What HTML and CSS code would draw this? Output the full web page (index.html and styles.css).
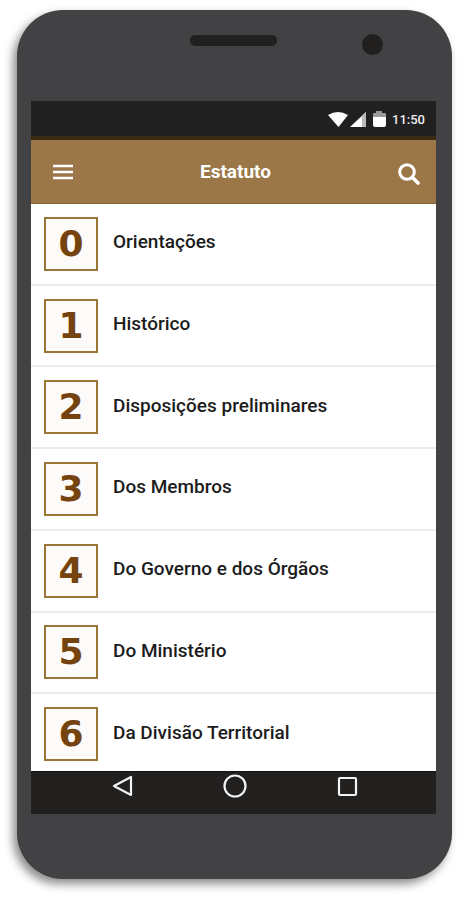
FILE: index.html
```html
<!DOCTYPE html>
<html lang="pt-BR">
<head>
    <meta charset="UTF-8">
    <meta name="viewport" content="width=device-width, initial-scale=1.0">
    <title>Estatuto</title>
    <link rel="stylesheet" href="styles.css">
</head>
<body>
    <div class="phone">
        <div class="phone-top">
            <span class="speaker"></span>
            <span class="camera"></span>
        </div>

        <div class="status-bar">
            <svg width="59" height="17" viewBox="0 0 59 17" aria-hidden="true">
                <path d="M0 4 Q10 -2 20 4 L10.500 16 Z" fill="#fff"/>
                <path d="M38 1 V16 H22 Z" fill="#fff"/>
                <path d="M34 5 L38 1 V16 H34 Z" fill="#bbb"/>
                <path d="M48 0 h6 v2 h2 q2 0 2 2 v10 q0 2 -2 2 h-9 q-2 0 -2 -2 v-10 q0 -2 2 -2 h1 z" fill="#fff"/>
                <path d="M48 0 h6 v2 h2 q2 0 2 2 v2 h-13 v-2 q0 -2 2 -2 h1 z" fill="#999"/>
            </svg>
            <span class="time">11:50</span>
        </div>

        <header class="app-bar">
            <button class="icon-button" type="button" aria-label="Menu">
                <svg width="20" height="16" viewBox="0 0 20 16">
                    <path d="M0 2 H20 M0 8 H20 M0 14 H20" stroke="#fff" stroke-width="2.600"/>
                </svg>
            </button>
            <h1>Estatuto</h1>
            <button class="icon-button search" type="button" aria-label="Buscar">
                <svg width="22" height="22" viewBox="0 0 22 22">
                    <circle cx="9" cy="9" r="7.300" fill="none" stroke="#fff" stroke-width="3"/>
                    <path d="M14.500 14.500 L20 20" stroke="#fff" stroke-width="3.600" stroke-linecap="round"/>
                </svg>
            </button>
        </header>

        <ul class="chapters">
            <li><a href="#orientacoes"><span class="number">0</span><span class="name">Orientações</span></a></li>
            <li><a href="#historico"><span class="number">1</span><span class="name">Histórico</span></a></li>
            <li><a href="#disposicoes"><span class="number">2</span><span class="name">Disposições preliminares</span></a></li>
            <li><a href="#membros"><span class="number">3</span><span class="name">Dos Membros</span></a></li>
            <li><a href="#governo"><span class="number">4</span><span class="name">Do Governo e dos Órgãos</span></a></li>
            <li><a href="#ministerio"><span class="number">5</span><span class="name">Do Ministério</span></a></li>
            <li><a href="#divisao"><span class="number">6</span><span class="name">Da Divisão Territorial</span></a></li>
        </ul>

        <nav class="nav-bar">
            <button type="button" aria-label="Voltar">
                <svg width="24" height="24" viewBox="0 0 24 24">
                    <path d="M3 12 L20 3 V21 Z"/>
                </svg>
            </button>
            <button type="button" aria-label="Início">
                <svg width="24" height="24" viewBox="0 0 24 24">
                    <circle cx="12" cy="12" r="10.500"/>
                </svg>
            </button>
            <button type="button" aria-label="Recentes">
                <svg width="24" height="24" viewBox="0 0 24 24">
                    <rect x="4" y="4" width="17" height="17" rx="1"/>
                </svg>
            </button>
        </nav>
    </div>
</body>
</html>
```
FILE: styles.css
```css
:root {
    --brand: #9b7748;
    --brand-dark: #3b2a12;
    --number-color: #74430f;
    --body-color: #424143;
    --bar-color: #221f1f;
    --line-color: #ececec;
}

* {
    box-sizing: border-box;
}

body {
    margin: 0;
    padding: 10px 12px 22px 17px;
    background-color: #fff;
    font-family: Roboto, "Noto Sans", sans-serif;
    color: #1c1c1c;
}

.phone {
    display: flex;
    flex-direction: column;
    padding: 0 16px 65px 14px;
    border-radius: 46px;
    background-color: var(--body-color);
    box-shadow: -4px 5px 10px rgba(0, 0, 0, 0.45);
}

.phone-top {
    display: grid;
    grid-template-columns: 1fr auto 1fr;
    align-items: start;
    height: 91px;
    padding-top: 24px;
}

.speaker {
    grid-column: 2;
    width: 87px;
    height: 11px;
    margin-top: 1px;
    border-radius: 5px;
    background-color: var(--bar-color);
}

.camera {
    justify-self: center;
    width: 21px;
    height: 21px;
    margin-left: 32px;
    border-radius: 50%;
    background-color: var(--bar-color);
}

.status-bar {
    display: flex;
    justify-content: flex-end;
    align-items: center;
    gap: 5px;
    height: 39px;
    padding: 2px 11px 0 0;
    border-bottom: 4px solid var(--brand-dark);
    background-color: #202021;
}

.time {
    color: #eee;
    font-family: Roboto, sans-serif;
    font-size: 13px;
    font-weight: 500;
}

.app-bar {
    display: flex;
    justify-content: space-between;
    align-items: center;
    height: 64px;
    padding: 0 14px 0 20px;
    border-bottom: 1px solid #8b6838;
    background-color: var(--brand);
}

.app-bar h1 {
    margin: 0;
    color: #fff;
    font-size: 19px;
    font-weight: 700;
}

.icon-button {
    display: flex;
    padding: 2px;
    border: none;
    background: none;
    cursor: pointer;
}

.search {
    padding-top: 6px;
}

/* the last row runs a little under the navigation bar */
.chapters {
    display: grid;
    grid-auto-rows: 1fr;
    height: 572px;
    margin: 0 0 -5px;
    padding: 0;
    background-color: #fff;
    list-style: none;
}

.chapters li {
    border-bottom: 2px solid var(--line-color);
}

.chapters a {
    display: flex;
    align-items: center;
    gap: 15px;
    height: 100%;
    padding: 0 13px;
    color: inherit;
    text-decoration: none;
}

.number {
    display: flex;
    justify-content: center;
    align-items: center;
    width: 54px;
    height: 54px;
    border: 2px solid #9c7638;
    background-color: #fdfafa;
    color: var(--number-color);
    font-family: "DejaVu Sans", sans-serif;
    font-size: 36px;
    font-weight: 700;
    line-height: 1;
}

.name {
    padding-bottom: 4px;
    font-size: 19px;
    font-weight: 500;
}

.nav-bar {
    display: flex;
    justify-content: space-between;
    align-items: flex-start;
    height: 43px;
    padding: 2px 77px 0 80px;
    border-top: 1px solid #111;
    background-color: var(--bar-color);
}

.nav-bar button {
    display: flex;
    padding: 0;
    border: none;
    background: none;
    cursor: pointer;
}

.nav-bar svg {
    fill: none;
    stroke: #f2f2f2;
    stroke-width: 2.2;
    stroke-linejoin: round;
}
```
